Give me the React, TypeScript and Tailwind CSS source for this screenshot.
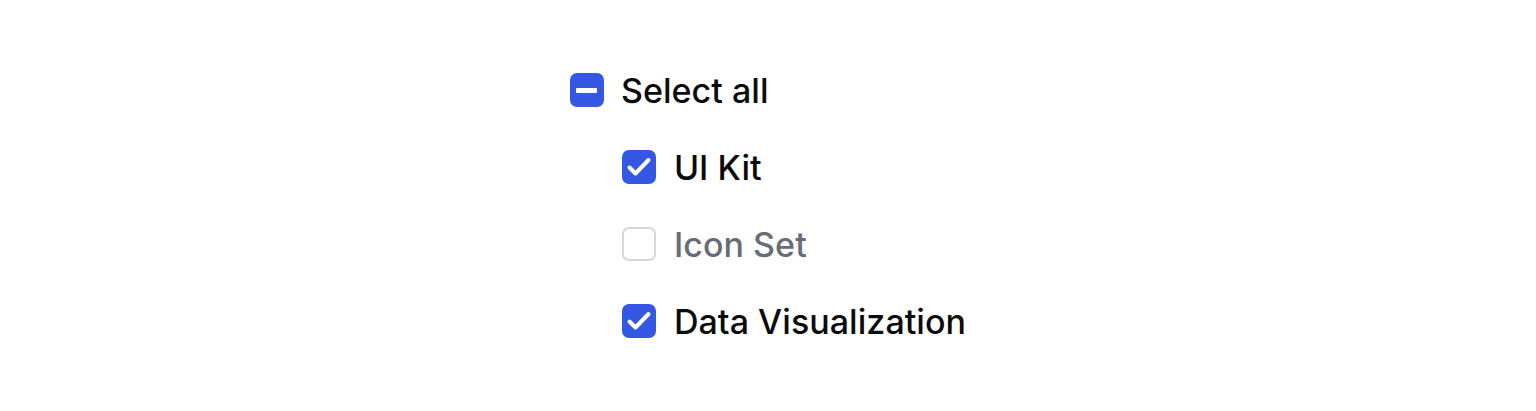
import { useState } from 'react';

type Item = { id: string; label: string; checked: boolean };

const initialItems: Item[] = [
  { id: 'ui', label: 'UI Kit', checked: true },
  { id: 'icons', label: 'Icon Set', checked: false },
  { id: 'data', label: 'Data Visualization', checked: true },
];

const Box = ({ state }: { state: 'on' | 'off' | 'mixed' }) => {
  if (state === 'off') {
    return <span className="block w-[34px] h-[34px] rounded-[7px] border-2 border-[#d4d6da] bg-white" />;
  }
  return (
    <span className="flex w-[34px] h-[34px] items-center justify-center rounded-[7px] bg-[#3458e3]">
      {state === 'mixed' ? (
        <span className="block w-[21px] h-[5px] rounded-[1px] bg-white" />
      ) : (
        <svg width="34" height="34" viewBox="0 0 34 34" fill="none">
          <path d="M7.5 17.5l6 6L26.5 10" stroke="white" strokeWidth="4" strokeLinecap="round" strokeLinejoin="round" />
        </svg>
      )}
    </span>
  );
};

export default function App() {
  const [items, setItems] = useState(initialItems);
  const count = items.filter((i) => i.checked).length;
  const allState = count === 0 ? 'off' : count === items.length ? 'on' : 'mixed';

  const toggleAll = () => {
    const next = allState !== 'on';
    setItems(items.map((i) => ({ ...i, checked: next })));
  };

  return (
    <div
      className="flex h-screen w-full items-center justify-center bg-white"
      style={{ fontFamily: 'Inter, "Noto Sans", sans-serif' }}
    >
      <div className="flex flex-col gap-[43px]">
        <button onClick={toggleAll} className="flex h-[34px] items-center gap-[17px] text-left">
          <Box state={allState} />
          <span className="text-[34px] font-medium tracking-[0.05px] text-[#0b0b0d]">Select all</span>
        </button>
        {items.map((item) => (
          <button
            key={item.id}
            onClick={() => setItems(items.map((i) => (i.id === item.id ? { ...i, checked: !i.checked } : i)))}
            className="ml-[52px] flex h-[34px] items-center gap-[18px] text-left"
          >
            <Box state={item.checked ? 'on' : 'off'} />
            <span
              className={
                item.checked
                  ? 'text-[34px] font-medium tracking-[0.05px] text-[#0b0b0d]'
                  : 'text-[34px] font-medium tracking-[0.05px] text-[#666d78]'
              }
            >
              {item.label}
            </span>
          </button>
        ))}
      </div>
    </div>
  );
}
